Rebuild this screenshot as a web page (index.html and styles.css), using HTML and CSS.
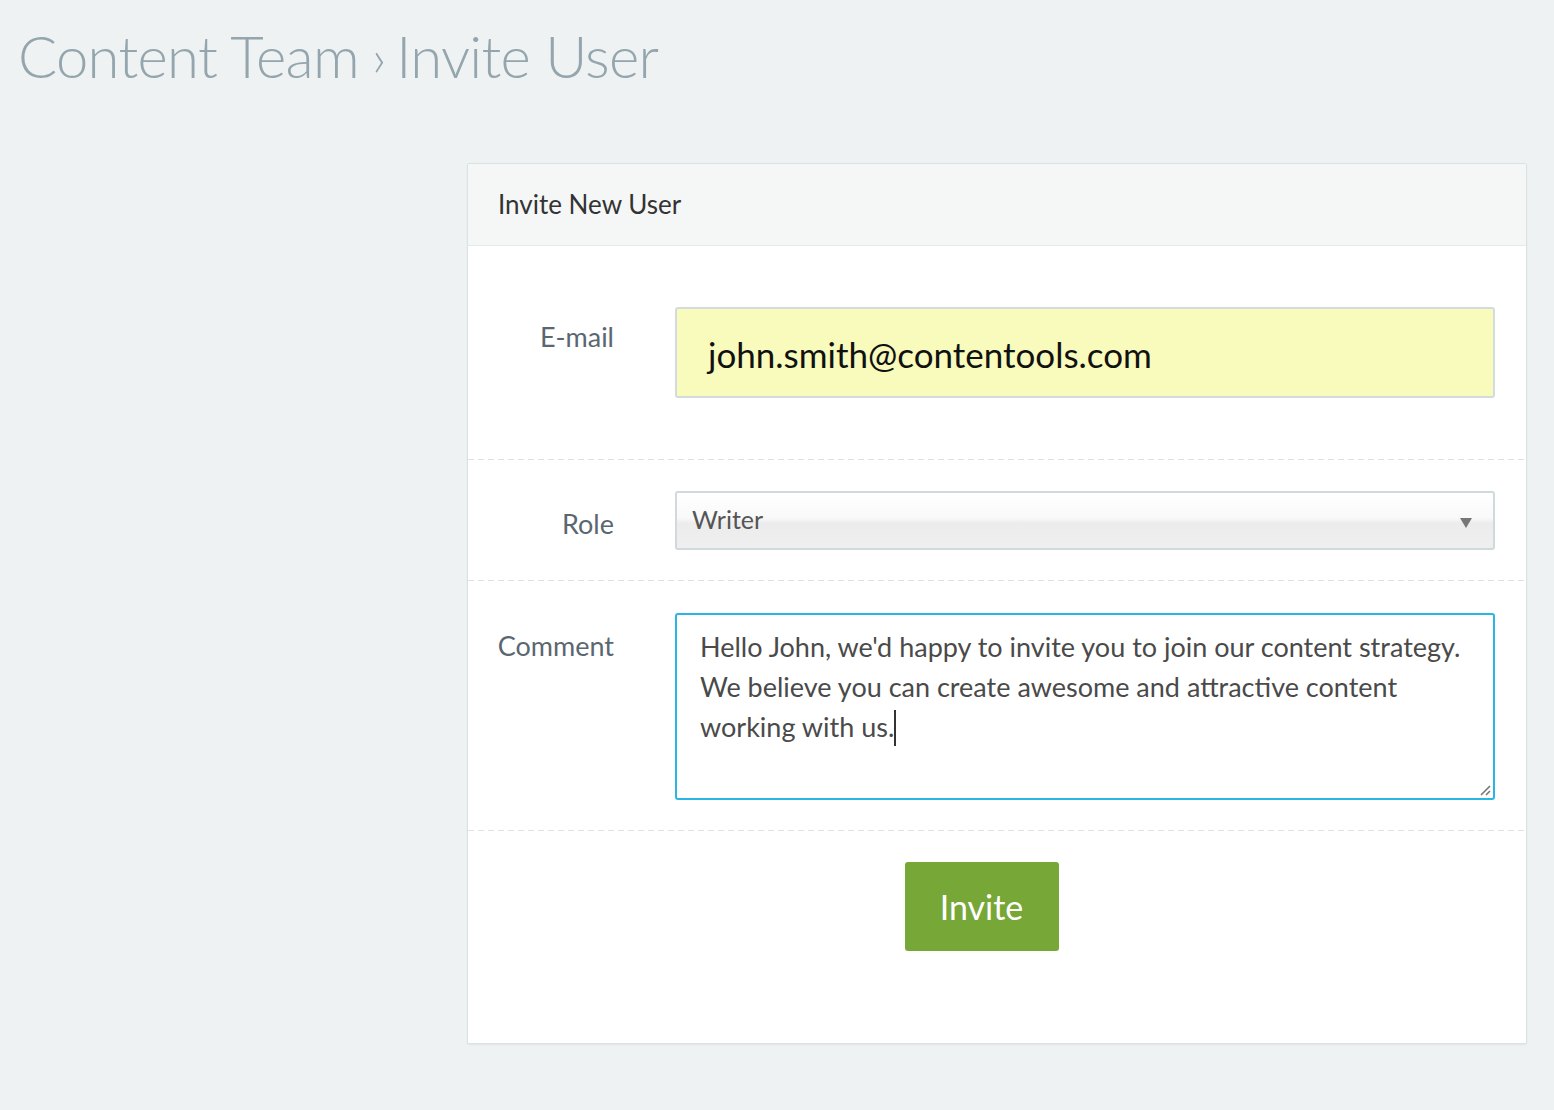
FILE: index.html
```html
<!DOCTYPE html>
<html>
<head>
<meta charset="utf-8">
<link rel="stylesheet" href="styles.css">
</head>
<body>
<h1 class="page-title">Content Team<span class="crumb-sep">›</span>Invite User</h1>
<div class="layout">
  <div class="card">
    <div class="card-header">Invite New User</div>
    <div class="row row-email">
      <div class="label">E-mail</div>
      <div class="field">
        <div class="input-email">john.smith@contentools.com</div>
      </div>
    </div>
    <div class="row row-role">
      <div class="label">Role</div>
      <div class="field">
        <div class="select">
          <span>Writer</span>
          <span class="arrow"></span>
        </div>
      </div>
    </div>
    <div class="row row-comment">
      <div class="label">Comment</div>
      <div class="field">
        <div class="textarea">Hello John, we'd happy to invite you to join our content strategy. We believe you can create awesome and attractive content working with us.<span class="caret"></span>
          <svg class="grip" width="12" height="12" viewBox="0 0 12 12"><path d="M2 11 L11 2 M7 11 L11 7" stroke="#777" stroke-width="1.6" fill="none"/></svg>
        </div>
      </div>
    </div>
    <div class="row row-actions">
      <button class="btn-invite">Invite</button>
    </div>
  </div>
</div>
</body>
</html>
```
FILE: styles.css
```css
html, body {
  margin: 0;
  padding: 0;
}
body {
  background: #eef2f3;
  font-family: "Source Sans Pro", Lato, "Liberation Sans", sans-serif;
  height: 1110px;
  overflow: hidden;
}
.page-title {
  margin: 0;
  padding: 21px 0 0 18px;
  font-weight: 300;
  font-size: 58px;
  line-height: 70px;
  color: #94a5ad;
  letter-spacing: -0.7px;
}
.crumb-sep {
  display: inline-block;
  font-size: 52px;
  margin: 0 11px 0 13px;
  vertical-align: 2px;
}
.layout {
  padding: 72px 27px 0 467px;
}
.card {
  background: #fff;
  border: 1px solid #dbe2e3;
  border-radius: 2px;
  box-shadow: 0 1px 2px rgba(0,0,0,0.06);
  height: 881px;
  box-sizing: border-box;
}
.card-header {
  background: #f5f7f7;
  border-bottom: 1px solid #e4e9ea;
  height: 82px;
  box-sizing: border-box;
  padding: 24px 30px 0;
  font-size: 26px;
  line-height: 32px;
  color: #333;
}
.row {
  display: flex;
  padding-right: 31px;
  background-image: linear-gradient(to right, #dde3e3 60%, transparent 60%);
  background-size: 10px 1px;
  background-repeat: repeat-x;
  background-position: bottom left;
}
.label {
  width: 146px;
  flex: none;
  text-align: right;
  font-size: 27px;
  color: #5b6770;
  padding-top: 17px;
  line-height: 32px;
}
.field {
  flex: 1;
  margin-left: 61px;
}
.row-email {
  padding-top: 61px;
  padding-bottom: 62px;
}
.row-email .label { padding-top: 14px; }
.input-email {
  height: 91px;
  box-sizing: border-box;
  background: #f8fbbb;
  border: 2px solid #d2dcde;
  border-radius: 3px;
  padding: 25px 0 0 31px;
  font-size: 35px;
  line-height: 40px;
  color: #111;
}
.row-role {
  padding-top: 31px;
  padding-bottom: 31px;
}
.select {
  height: 59px;
  box-sizing: border-box;
  border: 2px solid #d0dadc;
  border-radius: 3px;
  background: linear-gradient(to bottom, #ffffff 0%, #f9f9f9 45%, #ececec 55%, #efefef 100%);
  display: flex;
  align-items: center;
  justify-content: space-between;
  padding: 0 21px 4px 15px;
  font-size: 25px;
  color: #555;
}
.arrow {
  width: 0;
  height: 0;
  border-left: 6px solid transparent;
  border-right: 6px solid transparent;
  border-top: 10px solid #777;
  margin-top: 8px;
}
.row-comment {
  padding-top: 32px;
  padding-bottom: 31px;
}
.textarea {
  position: relative;
  height: 187px;
  box-sizing: border-box;
  border: 2px solid #2ab5e4;
  border-radius: 3px;
  padding: 12px 22px 0 23px;
  font-size: 27px;
  line-height: 40px;
  color: #4a4a4a;
}
.caret {
  display: inline-block;
  width: 2px;
  height: 36px;
  background: #333;
  vertical-align: -9px;
}
.grip {
  position: absolute;
  right: 2px;
  bottom: 2px;
}
.row-actions {
  justify-content: center;
  padding: 31px 31px 0 0;
  background: none;
}
.btn-invite {
  width: 154px;
  height: 89px;
  background: #76a737;
  border: none;
  border-radius: 3px;
  color: #fff;
  font-family: inherit;
  font-size: 34px;
  padding: 0;
}
```
